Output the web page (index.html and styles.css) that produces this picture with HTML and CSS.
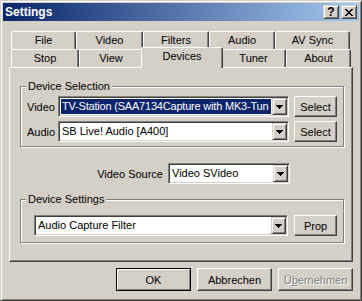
FILE: index.html
```html
<!DOCTYPE html>
<html lang="de">
<head>
  <meta charset="UTF-8">
  <title>Settings</title>
  <link rel="stylesheet" href="styles.css">
</head>
<body>

  <div class="window">

    <!-- TITLE BAR -->
    <div class="titlebar">
      <span class="title">Settings</span>
      <div class="caption-buttons">
        <button class="cap-btn help">?</button>
        <button class="cap-btn close">
          <svg width="8" height="7" viewBox="0 0 8 7" shape-rendering="crispEdges">
            <path d="M0 0h2v1H0zM6 0h2v1H6zM1 1h2v1H1zM5 1h2v1H5zM2 2h4v1H2zM3 3h2v1H3zM2 4h4v1H2zM1 5h2v1H1zM5 5h2v1H5zM0 6h2v1H0zM6 6h2v1H6z" fill="#000"/>
          </svg>
        </button>
      </div>
    </div>

    <!-- TABS -->
    <div class="tabs">
      <div class="tab-row">
        <div class="tab tab-file">File</div>
        <div class="tab tab-video">Video</div>
        <div class="tab tab-filters">Filters</div>
        <div class="tab tab-audio">Audio</div>
        <div class="tab tab-avsync">AV Sync</div>
      </div>
      <div class="tab-row">
        <div class="tab tab-stop">Stop</div>
        <div class="tab tab-view">View</div>
        <div class="tab tab-devices selected">Devices</div>
        <div class="tab tab-tuner">Tuner</div>
        <div class="tab tab-about">About</div>
      </div>

      <div class="tab-panel">

        <div class="group group-select">
          <span class="group-label">Device Selection</span>
          <div class="field-row">
            <span class="field-label">Video</span>
            <div class="combo combo-wide">
              <span class="combo-text highlight">TV-Station (SAA7134Capture with MK3-Tun</span>
              <span class="combo-btn">
                <svg width="7" height="4" viewBox="0 0 7 4" shape-rendering="crispEdges"><path d="M0 0h7v1H0zM1 1h5v1H1zM2 2h3v1H2zM3 3h1v1H3z" fill="#000"/></svg>
              </span>
            </div>
            <button class="btn btn-small">Select</button>
          </div>
          <div class="field-row">
            <span class="field-label">Audio</span>
            <div class="combo combo-wide">
              <span class="combo-text">SB Live! Audio [A400]</span>
              <span class="combo-btn">
                <svg width="7" height="4" viewBox="0 0 7 4" shape-rendering="crispEdges"><path d="M0 0h7v1H0zM1 1h5v1H1zM2 2h3v1H2zM3 3h1v1H3z" fill="#000"/></svg>
              </span>
            </div>
            <button class="btn btn-small">Select</button>
          </div>
        </div>

        <div class="source-row">
          <span class="source-label">Video Source</span>
          <div class="combo combo-source">
            <span class="combo-text">Video SVideo</span>
            <span class="combo-btn">
              <svg width="7" height="4" viewBox="0 0 7 4" shape-rendering="crispEdges"><path d="M0 0h7v1H0zM1 1h5v1H1zM2 2h3v1H2zM3 3h1v1H3z" fill="#000"/></svg>
            </span>
          </div>
        </div>

        <div class="group group-settings">
          <span class="group-label">Device Settings</span>
          <div class="field-row">
            <div class="combo combo-filter">
              <span class="combo-text">Audio Capture Filter</span>
              <span class="combo-btn">
                <svg width="7" height="4" viewBox="0 0 7 4" shape-rendering="crispEdges"><path d="M0 0h7v1H0zM1 1h5v1H1zM2 2h3v1H2zM3 3h1v1H3z" fill="#000"/></svg>
              </span>
            </div>
            <button class="btn btn-small">Prop</button>
          </div>
        </div>

      </div>
    </div>

    <!-- DIALOG BUTTONS -->
    <div class="actions">
      <button class="btn btn-dialog default">OK</button>
      <button class="btn btn-dialog">Abbrechen</button>
      <button class="btn btn-dialog" disabled>Ü<u>b</u>ernehmen</button>
    </div>

  </div>

</body>
</html>
```

FILE: styles.css
```css
:root {
  --face: #D4D0C8;
  --light: #FFFFFF;
  --shadow: #808080;
  --dark: #404040;
  --select: #0A246A;
}
* {
  box-sizing: border-box;
}
body {
  margin: 0;
  background: var(--face);
  font-family: "Liberation Sans", Arial, sans-serif;
  font-size: 11px;
  color: #000;
}
button {
  font-family: inherit;
  font-size: 11px;
  color: #000;
}

/* window frame */
.window {
  width: 362px;
  height: 301px;
  padding: 2px;
  background: var(--face);
  border: 1px solid;
  border-color: var(--face) var(--dark) var(--dark) var(--face);
  box-shadow: inset 1px 1px var(--light), inset -1px -1px var(--shadow);
}
.titlebar {
  height: 18px;
  display: flex;
  align-items: center;
  justify-content: space-between;
  padding: 0 2px;
  background: linear-gradient(to right, #0A246A, #A6CAF0);
}
.title {
  color: #fff;
  font-weight: bold;
  font-size: 12px;
}
.caption-buttons {
  display: flex;
  gap: 2px;
}
.cap-btn {
  width: 16px;
  height: 14px;
  padding: 0;
  display: flex;
  align-items: center;
  justify-content: center;
  background: var(--face);
  border: 1px solid;
  border-color: var(--face) var(--dark) var(--dark) var(--face);
  box-shadow: inset 1px 1px var(--light), inset -1px -1px var(--shadow);
}
.cap-btn.help {
  font-weight: bold;
  font-size: 12px;
  line-height: 12px;
}

/* tab control */
.tabs {
  margin: 10px 0 0 6px;
  width: 344px;
}
.tab-row {
  display: flex;
  height: 18px;
  padding-left: 2px;
}
.tab {
  height: 18px;
  line-height: 17px;
  text-align: center;
  background: var(--face);
  border-top: 1px solid var(--light);
  border-left: 1px solid var(--light);
  border-right: 1px solid var(--dark);
  border-radius: 2px 2px 0 0;
  box-shadow: inset -1px 0 var(--shadow);
}
.tab.selected {
  height: 21px;
  margin: -2px -2px -1px -2px;
  position: relative;
  z-index: 1;
}
.tab-file { width: 65px; }
.tab-video { width: 67px; }
.tab-filters { width: 66px; }
.tab-audio { width: 66px; }
.tab-avsync { width: 75px; }
.tab-stop { width: 68px; }
.tab-view { width: 64px; }
.tab-devices { width: 82px; }
.tab-tuner { width: 65px; }
.tab-about { width: 65px; }

.tab-panel {
  height: 195px;
  padding: 18px 8px 0 10px;
  border: 1px solid;
  border-color: var(--light) var(--dark) var(--dark) var(--light);
  box-shadow: inset -1px -1px var(--shadow);
}

/* group boxes */
.group {
  position: relative;
  border: 1px solid var(--shadow);
  box-shadow: 1px 1px 0 var(--light), inset 1px 1px 0 var(--light);
}
.group-label {
  position: absolute;
  top: -7px;
  left: 5px;
  padding: 0 2px;
  line-height: 13px;
  background: var(--face);
}
.group-select {
  height: 61px;
  padding: 9px 6px 0 6px;
  display: flex;
  flex-direction: column;
  gap: 4px;
}
.group-settings {
  height: 44px;
  margin-top: 15px;
  padding: 15px 6px 0 13px;
}
.field-row {
  display: flex;
  align-items: center;
  gap: 5px;
}
.field-label {
  width: 26px;
}

/* combo boxes */
.combo {
  height: 21px;
  display: flex;
  padding: 1px;
  background: #fff;
  border: 1px solid;
  border-color: var(--shadow) var(--light) var(--light) var(--shadow);
  box-shadow: inset 1px 1px var(--dark), inset -1px -1px var(--face);
}
.combo-wide { width: 231px; }
.combo-source { width: 122px; }
.combo-filter { width: 255px; margin-right: 1px; }
.combo-text {
  flex: 1;
  min-width: 0;
  margin: 1px;
  padding-left: 1px;
  line-height: 15px;
  white-space: nowrap;
  overflow: hidden;
}
.combo-text.highlight {
  background: var(--select);
  color: #fff;
  letter-spacing: -0.2px;
}
.combo-btn {
  width: 15px;
  height: 17px;
  display: flex;
  align-items: center;
  justify-content: center;
  background: var(--face);
  border: 1px solid;
  border-color: var(--face) var(--dark) var(--dark) var(--face);
  box-shadow: inset 1px 1px var(--light), inset -1px -1px var(--shadow);
}

.source-row {
  display: flex;
  align-items: center;
  gap: 5px;
  margin-top: 16px;
}
.source-label {
  width: 143px;
  text-align: right;
}

/* push buttons */
.btn {
  padding: 0;
  background: var(--face);
  border: 1px solid;
  border-color: var(--light) var(--dark) var(--dark) var(--light);
  box-shadow: inset -1px -1px var(--shadow);
}
.btn-small {
  width: 43px;
  height: 21px;
}
.btn-dialog {
  width: 75px;
  height: 23px;
}
.btn.default {
  border-color: #000;
  box-shadow: inset 1px 1px var(--light), inset -1px -1px var(--shadow);
}
.btn:disabled {
  color: var(--shadow);
  text-shadow: 1px 1px 0 var(--light);
}
.actions {
  display: flex;
  justify-content: flex-end;
  gap: 6px;
  margin-top: 6px;
  padding-right: 6px;
}
```
